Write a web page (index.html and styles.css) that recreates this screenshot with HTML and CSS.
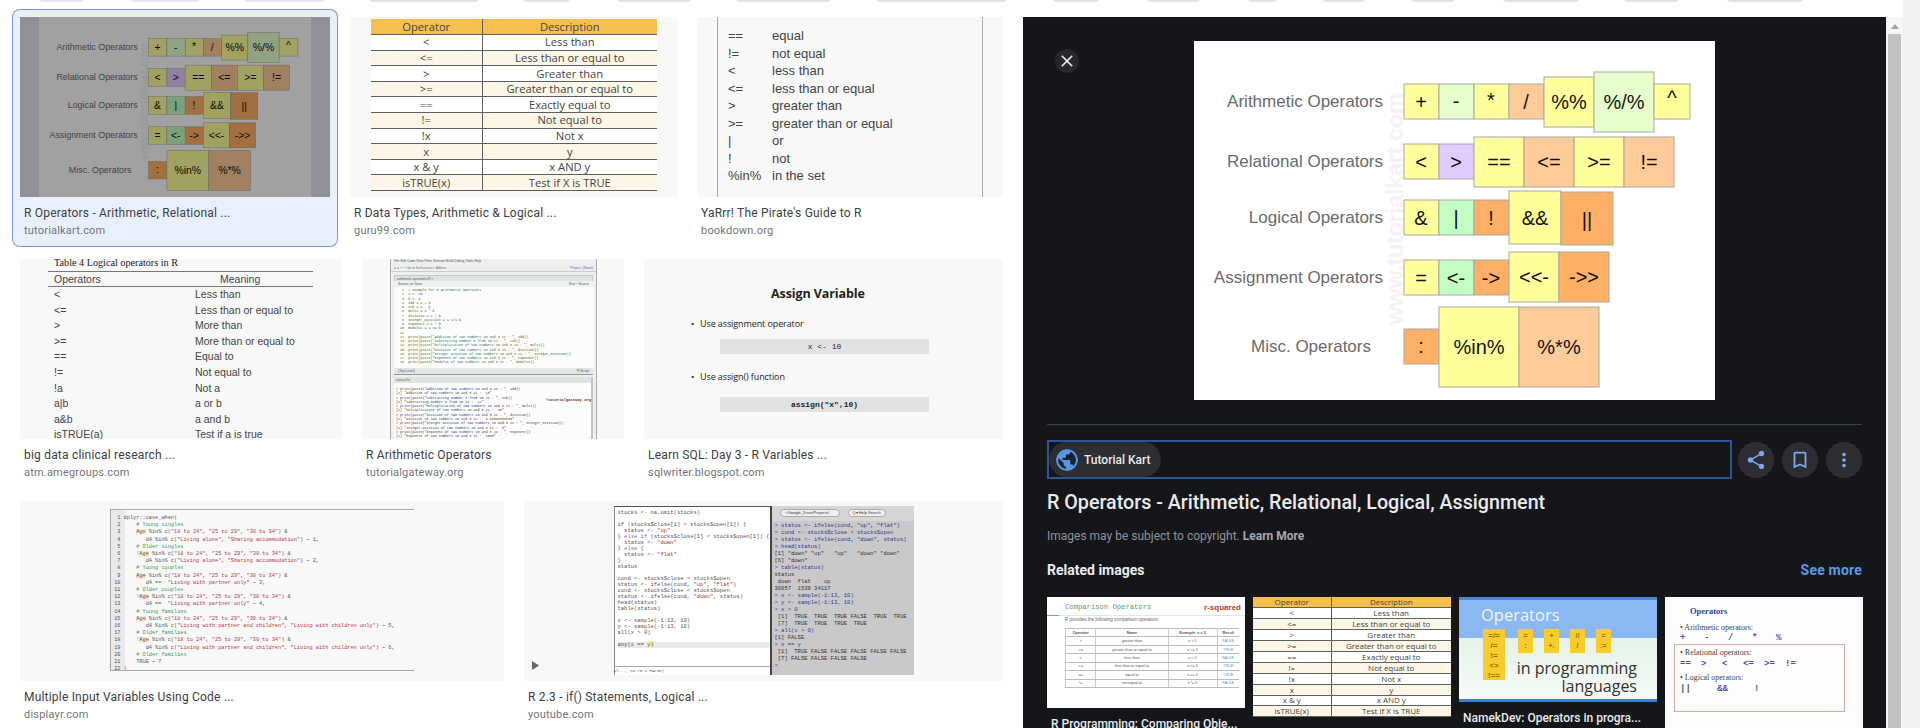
FILE: index.html
```html
<!DOCTYPE html>
<html lang="en">
<head>
<meta charset="utf-8">
<title>Image results</title>
<link rel="stylesheet" href="styles.css">
</head>
<body>
<svg class="defs" width="0" height="0" aria-hidden="true">
  <symbol id="ops" viewBox="0 0 521 359" preserveAspectRatio="none">
    <rect width="521" height="359" fill="#fff"/>
    <text class="mark" transform="translate(209 284) rotate(-90)" textLength="232">www.tutorialkart.com</text>
    <g class="lab">
      <text x="189" y="66">Arithmetic Operators</text>
      <text x="189" y="126">Relational Operators</text>
      <text x="189" y="182">Logical Operators</text>
      <text x="189" y="242">Assignment Operators</text>
      <text x="177" y="311">Misc. Operators</text>
    </g>
    <g class="box">
      <rect class="y" x="210" y="43" width="35" height="35"/>
      <rect class="g" x="245" y="43" width="35" height="35"/>
      <rect class="y" x="280" y="43" width="35" height="35"/>
      <rect class="o" x="315" y="43" width="35" height="35"/>
      <rect class="y" x="350" y="36" width="50" height="50"/>
      <rect class="g" x="400" y="31" width="60" height="60"/>
      <rect class="y" x="460" y="43" width="36" height="35"/>
      <rect class="y" x="210" y="103" width="35" height="35"/>
      <rect class="p" x="245" y="103" width="35" height="35"/>
      <rect class="y" x="280" y="96" width="50" height="50"/>
      <rect class="o" x="330" y="96" width="50" height="50"/>
      <rect class="y" x="380" y="96" width="50" height="50"/>
      <rect class="o" x="430" y="96" width="50" height="50"/>
      <rect class="y" x="210" y="159" width="35" height="35"/>
      <rect class="m" x="245" y="159" width="35" height="35"/>
      <rect class="d" x="280" y="159" width="35" height="35"/>
      <rect class="y" x="315" y="150" width="52" height="53"/>
      <rect class="d" x="367" y="151" width="52" height="53"/>
      <rect class="y" x="210" y="219" width="35" height="35"/>
      <rect class="m" x="245" y="219" width="35" height="35"/>
      <rect class="d" x="280" y="219" width="35" height="35"/>
      <rect class="y" x="315" y="211" width="50" height="50"/>
      <rect class="d" x="365" y="211" width="50" height="50"/>
      <rect class="d" x="210" y="288" width="35" height="35"/>
      <rect class="y" x="245" y="266" width="80" height="80"/>
      <rect class="o" x="325" y="266" width="80" height="80"/>
    </g>
    <g class="sym">
      <text x="227" y="68">+</text><text x="262" y="67">-</text><text x="297" y="66">*</text><text x="332" y="68">/</text>
      <text x="375" y="68">%%</text><text x="430" y="68">%/%</text><text x="478" y="64">^</text>
      <text x="227" y="128">&lt;</text><text x="262" y="128">&gt;</text><text x="305" y="128">==</text><text x="355" y="128">&lt;=</text><text x="405" y="128">&gt;=</text><text x="455" y="128">!=</text>
      <text x="227" y="184">&amp;</text><text x="262" y="184">|</text><text x="297" y="184">!</text><text x="341" y="184">&amp;&amp;</text><text x="393" y="186">||</text>
      <text x="227" y="244">=</text><text x="262" y="244">&lt;-</text><text x="297" y="244">-&gt;</text><text x="340" y="243">&lt;&lt;-</text><text x="390" y="243">-&gt;&gt;</text>
      <text x="227" y="312">:</text><text x="285" y="313">%in%</text><text x="365" y="313">%*%</text>
    </g>
  </symbol>
</svg>

<svg class="chips" width="1903" height="2" aria-hidden="true">
  <g class="chip-a">
    <rect x="38" y="-8" width="47" height="10" rx="5"/><rect x="129" y="-8" width="72" height="10" rx="5"/><rect x="243" y="-8" width="83" height="10" rx="5"/>
  </g>
  <g class="chip-b">
    <rect x="368" y="-8" width="112" height="10" rx="5"/><rect x="522" y="-8" width="49" height="10" rx="5"/><rect x="616" y="-8" width="76" height="10" rx="5"/><rect x="735" y="-8" width="97" height="10" rx="5"/><rect x="875" y="-8" width="133" height="10" rx="5"/><rect x="1052" y="-8" width="48" height="10" rx="5"/><rect x="1146" y="-8" width="55" height="10" rx="5"/><rect x="1247" y="-8" width="31" height="10" rx="5"/><rect x="1321" y="-8" width="46" height="10" rx="5"/><rect x="1410" y="-8" width="46" height="10" rx="5"/><rect x="1502" y="-8" width="78" height="10" rx="5"/><rect x="1623" y="-8" width="57" height="10" rx="5"/><rect x="1726" y="-8" width="78" height="10" rx="5"/>
  </g>
</svg>

<div class="page">
  <main class="results">
    <div class="row">
      <article class="card selected">
        <div class="thumb w310 ops-thumb"><svg class="ops-small"><use href="#ops"/></svg></div>
        <div class="title">R Operators - Arithmetic, Relational ...</div>
        <div class="site">tutorialkart.com</div>
      </article>
      <article class="card">
        <div class="thumb w327 center-x">
          <table class="optable big">
            <tr><th class="c1">Operator</th><th>Description</th></tr>
            <tr><td>&lt;</td><td>Less than</td></tr>
            <tr><td>&lt;=</td><td>Less than or equal to</td></tr>
            <tr><td>&gt;</td><td>Greater than</td></tr>
            <tr><td>&gt;=</td><td>Greater than or equal to</td></tr>
            <tr><td>==</td><td>Exactly equal to</td></tr>
            <tr><td>!=</td><td>Not equal to</td></tr>
            <tr><td>!x</td><td>Not x</td></tr>
            <tr><td>x</td><td>y</td></tr>
            <tr><td>x &amp; y</td><td>x AND y</td></tr>
            <tr><td>isTRUE(x)</td><td>Test if X is TRUE</td></tr>
          </table>
        </div>
        <div class="title">R Data Types, Arithmetic &amp; Logical ...</div>
        <div class="site">guru99.com</div>
      </article>
      <article class="card">
        <div class="thumb w306 pirate">
          <dl class="pirate-list">
            <dt>==</dt><dd>equal</dd>
            <dt>!=</dt><dd>not equal</dd>
            <dt>&lt;</dt><dd>less than</dd>
            <dt>&lt;=</dt><dd>less than or equal</dd>
            <dt>&gt;</dt><dd>greater than</dd>
            <dt>&gt;=</dt><dd>greater than or equal</dd>
            <dt>|</dt><dd>or</dd>
            <dt>!</dt><dd>not</dd>
            <dt>%in%</dt><dd>in the set</dd>
          </dl>
        </div>
        <div class="title">YaRrr! The Pirate's Guide to R</div>
        <div class="site">bookdown.org</div>
      </article>
    </div>

    <div class="row">
      <article class="card">
        <div class="thumb w322 table4">
          <div class="t4-cap">Table 4 Logical operators in R</div>
          <div class="t4-head"><span>Operators</span><span>Meaning</span></div>
          <div class="t4-row"><span>&lt;</span><span>Less than</span></div>
          <div class="t4-row"><span>&lt;=</span><span>Less than or equal to</span></div>
          <div class="t4-row"><span>&gt;</span><span>More than</span></div>
          <div class="t4-row"><span>&gt;=</span><span>More than or equal to</span></div>
          <div class="t4-row"><span>==</span><span>Equal to</span></div>
          <div class="t4-row"><span>!=</span><span>Not equal to</span></div>
          <div class="t4-row"><span>!a</span><span>Not a</span></div>
          <div class="t4-row"><span>a|b</span><span>a or b</span></div>
          <div class="t4-row"><span>a&amp;b</span><span>a and b</span></div>
          <div class="t4-row"><span>isTRUE(a)</span><span>Test if a is true</span></div>
        </div>
        <div class="title">big data clinical research ...</div>
        <div class="site">atm.amegroups.com</div>
      </article>
      <article class="card">
        <div class="thumb w262 center-x">
          <div class="rstudio">
            <div class="rs-menu">File  Edit  Code  View  Plots  Session  Build  Debug  Tools  Help</div>
            <div class="rs-tool"><span class="tool-icons">● ● ▪ ▪ ▪ Go to file/function ▪ Addins</span><span class="tool-proj">Project: (None)</span></div>
            <div class="rs-tab">arithmetic.operators.R ×</div>
            <div class="rs-sub"><span>Source on Save</span><span>Run ▪ Source</span></div>
            <pre class="rs-code"> 1  # Example for R Arithmetic Operators
 2  a &lt;- 10
 3  b &lt;- 3
 4  add = a + b
 5  sub = a - b
 6  multi = a * b
 7  division = a / b
 8  Integer_Division = a %/% b
 9  exponent = a ^ b
10  modulus = a %% b
11
12  print(paste("Addition of two numbers 10 and 3 is : ", add))
13  print(paste("Subtracting Number 3 from 10 is : ", sub))
14  print(paste("Multiplication of two numbers 10 and 3 is : ", multi))
15  print(paste("Division of two numbers 10 and 3 is : ", division))
16  print(paste("Integer Division of two numbers 10 and 3 is : ", Integer_Division))
17  print(paste("Exponent of two numbers 10 and 3 is : ", exponent))
18  print(paste("Modulus of two numbers 10 and 3 is : ", modulus))</pre>
            <div class="rs-bar"><span>(Top Level)</span><span>R Script</span></div>
            <div class="rs-console">
              <div class="rs-ctitle">Console</div>
              <pre class="rs-out"><span class="blue">&gt; print(paste("Addition of two numbers 10 and 3 is : ", add))</span>
[1] "Addition of two numbers 10 and 3 is :  13"
<span class="blue">&gt; print(paste("Subtracting Number 3 from 10 is : ", sub))</span>
[1] "Subtracting Number 3 from 10 is :  12"
<span class="blue">&gt; print(paste("Multiplication of two numbers 10 and 3 is : ", multi))</span>
[1] "Multiplication of two numbers 10 and 3 is :  30"
<span class="blue">&gt; print(paste("Division of two numbers 10 and 3 is : ", division))</span>
[1] "Division of two numbers 10 and 3 is :  3.33333333333"
<span class="blue">&gt; print(paste("Integer Division of two numbers 10 and 3 is : ", Integer_Division))</span>
[1] "Integer Division of two numbers 10 and 3 is :  3"
<span class="blue">&gt; print(paste("Exponent of two numbers 10 and 3 is : ", exponent))</span>
[1] "Exponent of two numbers 10 and 3 is :  1000"</pre>
              <div class="rs-stamp">©tutorialgateway.org</div>
            </div>
          </div>
        </div>
        <div class="title">R Arithmetic Operators</div>
        <div class="site">tutorialgateway.org</div>
      </article>
      <article class="card">
        <div class="thumb w359 assign">
          <div class="as-title">Assign Variable</div>
          <div class="as-bullet">Use assignment operator</div>
          <div class="as-code">x &lt;- 10</div>
          <div class="as-bullet second">Use assign() function</div>
          <div class="as-code bold">assign("x",10)</div>
        </div>
        <div class="title">Learn SQL: Day 3 - R Variables ...</div>
        <div class="site">sqlwriter.blogspot.com</div>
      </article>
    </div>

    <div class="row">
      <article class="card">
        <div class="thumb w484 center-x">
          <pre class="code-shot">  1 dplyr::case_when(
  2     <i># Young singles</i>
  3     <u>Age</u> %in% c(<b>"18 to 24", "25 to 29", "30 to 34"</b>) &amp;
  4        d4 %in% c(<b>"Living alone", "Sharing accommodation"</b>) ~ 1,
  5     <i># Older singles</i>
  6     !<u>Age</u> %in% c(<b>"18 to 24", "25 to 29", "30 to 34"</b>) &amp;
  7        d4 %in% c(<b>"Living alone", "Sharing accommodation"</b>) ~ 2,
  8     <i># Young couples</i>
  9     <u>Age</u> %in% c(<b>"18 to 24", "25 to 29", "30 to 34"</b>) &amp;
 10        d4 ==  <b>"Living with partner only"</b> ~ 3,
 11     <i># Older couples</i>
 12     !<u>Age</u> %in% c(<b>"18 to 24", "25 to 29", "30 to 34"</b>) &amp;
 13        d4 ==  <b>"Living with partner only"</b> ~ 4,
 14     <i># Young families</i>
 15     <u>Age</u> %in% c(<b>"18 to 24", "25 to 29", "30 to 34"</b>) &amp;
 16        d4 %in% c(<b>"Living with partner and children", "Living with children only"</b>) ~ 5,
 17     <i># Older families</i>
 18     !<u>Age</u> %in% c(<b>"18 to 24", "25 to 29", "30 to 34"</b>) &amp;
 19        d4 %in% c(<b>"Living with partner and children", "Living with children only"</b>) ~ 6,
 20     <i># Older families</i>
 21     TRUE ~ 7
 22 )</pre>
        </div>
        <div class="title">Multiple Input Variables Using Code ...</div>
        <div class="site">displayr.com</div>
      </article>
      <article class="card">
        <div class="thumb w479 center-x video">
          <div class="r-shot">
            <div class="r-left">
<pre class="r-src">stocks &lt;- na.omit(stocks)

if (stocks$close[1] &gt; stocks$open[1]) {
  status &lt;- <b>"up"</b>
} <i>else if</i> (stocks$close[1] &lt; stocks$open[1]) {
  status &lt;- <b>"down"</b>
} <i>else</i> {
  status &lt;- <b>"flat"</b>
}
status

cond &lt;- stocks$close &gt; stocks$open
status &lt;- ifelse(cond, <b>"up"</b>, <b>"flat"</b>)
cond &lt;- stocks$close &lt; stocks$open
status &lt;- ifelse(cond, <b>"down"</b>, status)
head(status)
table(status)

x &lt;- sample(-1:13, 10)
y &lt;- sample(-1:13, 10)
all(x &gt; 0)

<span class="hl">any(x == <em>y)</em></span></pre>
              <div class="r-foot">al..., na.rm = FALSE)</div>
            </div>
            <div class="r-right">
              <div class="r-pills"><span class="r-pill wide">~/Google_Drive/Projects/</span><span class="r-pill">Q▾ Help Search</span></div>
<pre class="r-con"><span class="blue">&gt; status &lt;- ifelse(cond, "up", "flat")
&gt; cond &lt;- stocks$close &lt; stocks$open
&gt; status &lt;- ifelse(cond, "down", status)
&gt; head(status)</span>
[1] "down" "up"   "up"   "down" "down"
[6] "down"
<span class="blue">&gt; table(status)</span>
status
 down  flat    up
36057  1539 34117
<span class="blue">&gt; x &lt;- sample(-1:13, 10)
&gt; y &lt;- sample(-1:13, 10)
&gt; x &gt; 0</span>
 [1]  TRUE  TRUE  TRUE FALSE  TRUE  TRUE
 [7]  TRUE  TRUE  TRUE  TRUE
<span class="blue">&gt; all(x &gt; 0)</span>
[1] FALSE
<span class="blue">&gt; x == y</span>
 [1]  TRUE FALSE FALSE FALSE FALSE FALSE
 [7] FALSE FALSE FALSE FALSE
<span class="blue">&gt;</span></pre>
            </div>
          </div>
          <svg class="play" width="7" height="9" viewBox="0 0 7 9" aria-hidden="true"><path d="M0 0l7 4.500-7 4.500z"/></svg>
        </div>
        <div class="title">R 2.3 - if() Statements, Logical ...</div>
        <div class="site">youtube.com</div>
      </article>
    </div>
  </main>

  <aside class="panel">
    <button class="close" aria-label="Close">
      <svg width="20" height="20" viewBox="0 0 24 24"><path d="M19 6.410L17.590 5 12 10.590 6.410 5 5 6.410 10.590 12 5 17.590 6.410 19 12 13.410 17.590 19 19 17.590 13.410 12z"/></svg>
    </button>
    <div class="hero"><svg class="ops-large"><use href="#ops"/></svg></div>
    <hr class="rule">
    <div class="source-row">
      <div class="focus">
        <div class="source-chip">
          <svg width="22" height="22" viewBox="2 2 20 20" class="globe"><path d="M12 2C6.480 2 2 6.480 2 12s4.480 10 10 10 10-4.480 10-10S17.520 2 12 2zm-1 17.930c-3.950-.490-7-3.850-7-7.930 0-.620.080-1.210.210-1.790L9 15v1c0 1.100.900 2 2 2v1.930zm6.900-2.540c-.260-.810-1-1.390-1.900-1.390h-1v-3c0-.550-.450-1-1-1H8v-2h2c.550 0 1-.450 1-1V7h2c1.100 0 2-.900 2-2v-.410c2.930 1.190 5 4.060 5 7.410 0 2.080-.800 3.970-2.100 5.390z"/></svg>
          <span>Tutorial Kart</span>
        </div>
      </div>
      <div class="actions">
        <span class="round"><svg width="22" height="22" viewBox="0 0 24 24"><path d="M18 16.080c-.760 0-1.440.300-1.960.770L8.910 12.700c.050-.230.090-.460.090-.700s-.040-.470-.090-.700l7.050-4.110c.540.500 1.250.810 2.040.810 1.660 0 3-1.340 3-3s-1.340-3-3-3-3 1.340-3 3c0 .240.040.470.090.700L8.040 9.810C7.500 9.310 6.790 9 6 9c-1.660 0-3 1.340-3 3s1.340 3 3 3c.790 0 1.500-.310 2.040-.810l7.120 4.160c-.050.210-.080.430-.080.650 0 1.610 1.310 2.920 2.920 2.920 1.610 0 2.920-1.310 2.920-2.920s-1.310-2.920-2.920-2.920z"/></svg></span>
        <span class="round"><svg width="22" height="22" viewBox="0 0 24 24"><path d="M17 3H7c-1.100 0-2 .900-2 2v16l7-3 7 3V5c0-1.100-.900-2-2-2zm0 15l-5-2.180L7 18V5h10v13z"/></svg></span>
        <span class="round"><svg width="22" height="22" viewBox="0 0 24 24"><path d="M12 8c1.100 0 2-.900 2-2s-.900-2-2-2-2 .900-2 2 .900 2 2 2zm0 2c-1.100 0-2 .900-2 2s.900 2 2 2 2-.900 2-2-.900-2-2-2zm0 6c-1.100 0-2 .900-2 2s.900 2 2 2 2-.900 2-2-.900-2-2-2z"/></svg></span>
      </div>
    </div>
    <h1 class="heading">R Operators - Arithmetic, Relational, Logical, Assignment</h1>
    <p class="copyright">Images may be subject to copyright. <strong>Learn More</strong></p>
    <div class="related-head"><h2>Related images</h2><a>See more</a></div>
    <div class="related">
      <div class="rel-col">
        <div class="slide">
          <div class="sl-top"><span class="sl-title">Comparison Operators</span><span class="sl-brand">r-squared</span></div>
          <div class="sl-line"></div>
          <div class="sl-text">R provides the following comparison operators:</div>
          <table class="sl-table">
            <tr><th>Operator</th><th>Name</th><th>Example: x = 5</th><th>Result</th></tr>
            <tr><td>&gt;</td><td>greater than</td><td>x &gt; 5</td><td class="v">FALSE</td></tr>
            <tr><td>&gt;=</td><td>greater than or equal to</td><td>x &gt;= 5</td><td class="v">TRUE</td></tr>
            <tr><td>&lt;</td><td>less than</td><td>x &lt; 5</td><td class="v">FALSE</td></tr>
            <tr><td>&lt;=</td><td>less than or equal to</td><td>x &lt;= 5</td><td class="v">TRUE</td></tr>
            <tr><td>==</td><td>equal to</td><td>x == 5</td><td class="v">TRUE</td></tr>
            <tr><td>!=</td><td>not equal to</td><td>x != 5</td><td class="v">FALSE</td></tr>
          </table>
        </div>
        <div class="rel-cap">R Programming: Comparing Obje...</div>
      </div>
      <div class="rel-col">
        <table class="optable small">
          <tr><th class="c1">Operator</th><th>Description</th></tr>
          <tr><td>&lt;</td><td>Less than</td></tr>
          <tr><td>&lt;=</td><td>Less than or equal to</td></tr>
          <tr><td>&gt;</td><td>Greater than</td></tr>
          <tr><td>&gt;=</td><td>Greater than or equal to</td></tr>
          <tr><td>==</td><td>Exactly equal to</td></tr>
          <tr><td>!=</td><td>Not equal to</td></tr>
          <tr><td>!x</td><td>Not x</td></tr>
          <tr><td>x</td><td>y</td></tr>
          <tr><td>x &amp; y</td><td>x AND y</td></tr>
          <tr><td>isTRUE(x)</td><td>Test if X is TRUE</td></tr>
        </table>
      </div>
      <div class="rel-col">
        <div class="namek">
          <div class="nk-title">Operators</div>
          <div class="nk-blocks">
            <span class="nk-b tall">=/=<br>/=<br>!=<br>&lt;&gt;<br>!==</span>
            <span class="nk-b">=<br>:</span><span class="nk-b">+<br>+.</span><span class="nk-b">//<br>/</span><span class="nk-b">=<br>:=</span>
          </div>
          <div class="nk-text">in programming<br>languages</div>
        </div>
        <div class="rel-cap">NamekDev: Operators in progra...</div>
      </div>
      <div class="rel-col">
        <div class="notes">
          <div class="nt-head">Operators</div>
          <div class="nt-item">Arithmetic operators:</div>
          <div class="nt-sym s-a"><span>+</span><span>-</span><span>/</span><span>*</span><span>%</span></div>
          <div class="nt-box">
            <div class="nt-item">Relational operators:</div>
            <div class="nt-sym s-r"><span>==</span><span>&gt;</span><span>&lt;</span><span>&lt;=</span><span>&gt;=</span><span>!=</span></div>
            <div class="nt-item">Logical operators:</div>
            <div class="nt-sym s-l"><span>||</span><span>&amp;&amp;</span><span>!</span></div>
          </div>
        </div>
      </div>
    </div>
  </aside>

  <div class="scroll-inner" aria-hidden="true"><span class="arrow"></span><span class="thumbbar"></span></div>
  <div class="scroll-outer" aria-hidden="true"></div>
</div>
</body>
</html>
```
FILE: styles.css
```css
* { box-sizing: border-box; }
html, body { margin: 0; padding: 0; }
body { width: 1920px; height: 728px; overflow: hidden; background: #fff; font-family: Roboto, "Liberation Sans", sans-serif; position: relative; }
.defs { position: absolute; }
.chips { position: absolute; left: 0; top: 0; }
.chip-a { fill: #e9e3ee; }
.chip-b { fill: #e2e3e5; }

.page { display: flex; height: 728px; }
.results { width: 1023px; flex: none; padding: 9px 0 0 12px; display: flex; flex-direction: column; gap: 4px; }
.row { display: flex; gap: 4px; height: 238px; flex: none; }
.card { padding: 8px 8px 0; height: 238px; flex: none; border-radius: 8px; }
.card.selected { background: #e8f0fe; box-shadow: inset 0 0 0 1px #6f9fe0; }
.thumb { height: 180px; background: #f8f8f8; position: relative; overflow: hidden; }
.w262 { width: 262px; } .w306 { width: 306px; } .w310 { width: 310px; } .w322 { width: 322px; } .w327 { width: 327px; }
.w359 { width: 359px; } .w479 { width: 479px; } .w484 { width: 484px; }
.center-x { display: flex; justify-content: center; }
.title { margin: 8px 4px 0; font-size: 12px; line-height: 16px; color: #3c4043; letter-spacing: .2px; white-space: nowrap; }
.site { margin: 2px 4px 0; font-size: 11px; line-height: 16px; color: #70757a; letter-spacing: .2px; white-space: nowrap; }

/* operator diagram */
.ops-thumb { display: flex; justify-content: center; background: #e2e6f0; }
.ops-thumb::after { content: ""; position: absolute; inset: 0; background: rgba(0,0,0,.37); }
.ops-small { width: 272px; height: 180px; display: block; }
.ops-large { width: 521px; height: 359px; display: block; }
.lab text { font: 17px "Liberation Sans", sans-serif; fill: #6a6a6a; text-anchor: end; }
.mark { font: bold 24px "Liberation Sans", sans-serif; fill: #f3f3f3; }
.box rect { stroke: #a8a8a0; stroke-width: 1; }
.y { fill: #ffff9c; } .g { fill: #e6ffcc; } .o { fill: #ffcc99; } .p { fill: #e2ccff; } .m { fill: #c4ffc4; } .d { fill: #ffb066; }
.sym text { font: 20px "Liberation Sans", sans-serif; fill: #111; text-anchor: middle; }

/* operator table */
.optable { border-collapse: collapse; table-layout: fixed; font-family: "Open Sans", sans-serif; color: #444; text-align: center; background: #fff; }
.optable th { background: #f6c04e; font-weight: 400; }
.optable th, .optable td { padding: 0; border: 0; border-bottom: 1px solid #5f5f5f; border-left: 1px solid #5f5f5f; white-space: nowrap; overflow: hidden; }
.optable th:first-child, .optable td:first-child { border-left: 0; }
.optable tr:nth-child(odd) td { background: #fdf5e6; }
.optable.big { margin-top: 2px; width: 286px; height: 172px; font-size: 11.200px; line-height: 14px; }
.optable.big tr { height: 15.600px; }
.optable.big .c1 { width: 112px; }
.optable.small { width: 198px; height: 120px; font-size: 8px; line-height: 1; }
.optable.small tr { height: 10.900px; }
.optable.small .c1 { width: 78px; }

/* pirate list */
.pirate { padding: 0 20px; }
.pirate-list { margin: 0; height: 180px; width: 266px; border-left: 1px solid #aaa; border-right: 1px solid #aaa; padding: 10px 0 0 10px; display: grid; grid-template-columns: 44px 1fr; grid-auto-rows: 17.500px; font: 13px/17.500px "Liberation Sans", sans-serif; color: #444; }
.pirate-list dt, .pirate-list dd { margin: 0; }

/* table 4 */
.table4 { padding: 0 29px 0 28px; font: 10.500px "Liberation Sans", sans-serif; color: #444; }
.t4-cap { font: 10.200px/8px "Liberation Serif", serif; color: #222; padding: 0 0 4px 6px; }
.t4-head { height: 16px; border-top: 1px solid #777; border-bottom: 1px solid #777; padding-left: 6px; display: flex; line-height: 15px; }
.t4-head span:first-child { width: 166px; }
.t4-row { height: 15.600px; line-height: 14px; padding-left: 6px; display: flex; white-space: nowrap; }
.t4-row span:first-child { width: 141px; }

/* rstudio */
.rstudio { width: 207px; height: 180px; background: #eef0ef; border-left: 1px solid #aaa; border-right: 1px solid #aaa; font-family: "Liberation Mono", monospace; font-size: 3.400px; color: #556; overflow: hidden; margin-left: 1px; }
.rs-menu { height: 5px; line-height: 5px; padding-left: 3px; font-family: "Liberation Sans", sans-serif; }
.rs-tool { height: 8px; line-height: 8px; display: flex; justify-content: space-between; padding: 0 3px; border-bottom: 1px solid #ccc; font-family: "Liberation Sans", sans-serif; }
.tool-icons { color: #5a80b0; }
.tool-proj { color: #3f6fae; }
.rs-tab { height: 6px; margin: 3px 3px 0; line-height: 6px; background: #dfe3e3; padding-left: 2px; font-family: "Liberation Sans", sans-serif; border: 1px solid #c8c8c8; border-bottom: 0; }
.rs-sub { height: 6px; line-height: 6px; margin: 0 3px; padding: 0 4px; display: flex; justify-content: space-between; background: #f0f2f2; font-family: "Liberation Sans", sans-serif; }
.rs-code { margin: 0 3px; height: 81px; padding: 1px 0 0 6px; font: inherit; line-height: 4.250px; color: #3f6b3f; background: #fbfcfb; white-space: pre; overflow: hidden; }
.rs-bar { height: 7px; line-height: 6px; margin: 0 3px; padding: 0 4px; background: #e4e7e7; border-bottom: 1px solid #999; display: flex; justify-content: space-between; font-family: "Liberation Sans", sans-serif; }
.rs-console { margin: 2px 3px 0; background: #fbfcfb; position: relative; height: 70px; border-right: 2px solid #c5c5c5; }
.rs-ctitle { height: 6px; line-height: 6px; padding-left: 2px; background: #dfe3e3; }
.rs-out { margin: 0; padding: 4px 0 0 2px; font: inherit; line-height: 4.300px; color: #444; white-space: pre; overflow: hidden; }
.blue { color: #33358f; }
.rs-stamp { position: absolute; right: 0; top: 21px; color: #6b2f1e; font-weight: bold; font-size: 3.800px; background: #fbfcfb; }

/* assign */
.assign { background: #f8f8f8; font-family: "Open Sans", sans-serif; color: #222; padding: 27px 0 0 56px; }
.as-title { font-size: 12.500px; font-weight: 700; line-height: 16px; padding-left: 71px; letter-spacing: -.1px; }
.as-bullet { margin-top: 15px; margin-left: -9px; font-size: 9px; line-height: 14px; letter-spacing: -.1px; display: flex; }
.as-bullet::before { content: "•"; width: 9px; flex: none; }
.as-bullet.second { margin-top: 16px; }
.as-code { margin: 8px 0 0 20px; width: 209px; height: 15px; background: #e1e2e4; font: 8px/15px "Liberation Mono", monospace; text-align: center; }
.as-code.bold { font-weight: 700; margin-top: 13px; }

/* code shot */
.code-shot { margin: 8px 0 0; width: 304px; height: 162px; padding-top: 5px; font: 5.250px/7.200px "Liberation Mono", monospace; color: #555; border-top: 1px solid #aaa; border-bottom: 1px solid #aaa; border-left: 1px solid #aaa; background: linear-gradient(90deg, #e9e9e9 14px, #f8f8f8 14px); overflow: hidden; }
.code-shot i { font-style: normal; color: #3c9a63; }
.code-shot b { font-weight: 400; color: #b5384e; }
.code-shot u { text-decoration: none; background: #fbe6cf; }

/* R shot */
.video { position: relative; }
.r-shot { margin: 5px 0 0 0; width: 300px; height: 169px; display: flex; font-family: "Liberation Mono", monospace; font-size: 5.500px; }
.r-left { width: 158px; background: #fff; border-left: 1px solid #888; border-right: 2px solid #444; border-top: 1px solid #555; position: relative; color: #555; }
.r-src { margin: 0; padding: 3px 0 0 3px; font: inherit; line-height: 6px; height: 150px; overflow: hidden; }
.r-src b { font-weight: 400; color: #a33; }
.r-src i { font-style: normal; color: #86a; }
.r-src em { font-style: normal; background: #f2ee9c; }
.hl { display: inline-block; width: 152px; background: #e9e9e9; }
.r-foot { position: absolute; left: -1px; bottom: 0; right: 0; height: 9px; line-height: 9px; border-top: 1px solid #aaa; font-size: 4px; }
.r-right { flex: 1; background: #c9c9c9; color: #333; }
.r-pills { height: 15px; display: flex; gap: 8px; padding: 3px 0 0 8px; background: #d6d6d6; font: 4px/8px "Liberation Sans", sans-serif; }
.r-pill { background: #f0f0f0; border: 1px solid #aaa; border-radius: 5px; padding: 0 4px; height: 8px; line-height: 6px; }
.r-pill.wide { width: 60px; }
.r-con { margin: 0; padding: 1px 0 0 3px; font: inherit; line-height: 7px; }
.play { position: absolute; left: 8px; bottom: 11px; fill: #666; }

/* panel */
.panel { width: 863px; flex: none; margin-top: 17px; height: 711px; background: #15161a; padding: 24px 24px 0; position: relative; overflow: hidden; color: #e8eaed; }
.close { position: absolute; left: 32px; top: 32px; width: 24px; height: 24px; padding: 2px; border: 0; border-radius: 50%; background: #26282c; fill: #e6e6e6; }
.close svg { display: block; }
.hero { display: flex; justify-content: center; height: 359px; }
.rule { margin: 24px 0 0; height: 1px; border: 0; background: #3c4043; }
.source-row { margin-top: 15px; display: flex; align-items: center; height: 39px; }
.focus { width: 685px; height: 39px; border: 2px solid #2c5697; padding: 0; flex: none; }
.source-chip { width: 112px; height: 35px; border-radius: 18px; background: #2d2e31; display: flex; align-items: center; gap: 6px; padding-left: 7px; font-size: 12px; font-weight: 500; color: #e8eaed; white-space: nowrap; }
.globe { fill: #5a95e4; background: #1b2330; border-radius: 50%; flex: none; }
.actions { display: flex; gap: 8px; margin-left: 6px; }
.round { width: 36px; height: 36px; border-radius: 50%; background: #2d2e31; display: flex; align-items: center; justify-content: center; fill: #7aa8ea; }
.heading { margin: 12px 0 0; font-size: 19.700px; line-height: 24px; font-weight: 500; color: #e8eaed; white-space: nowrap; }
.copyright { margin: 11px 0 0; font-size: 12px; line-height: 20px; color: #8f9398; }
.copyright strong { font-weight: 700; color: #a5a8ac; }
.related-head { margin-top: 14px; display: flex; justify-content: space-between; align-items: center; height: 20px; }
.related-head h2 { margin: 0; font-size: 14px; font-weight: 700; color: #e8eaed; }
.related-head a { font-size: 14px; font-weight: 700; color: #5b9be8; letter-spacing: .2px; }
.related { margin-top: 17px; display: grid; grid-template-columns: repeat(4, 198px); gap: 8px; align-items: start; }
.rel-cap { margin: 8px 0 0 4px; font-size: 12px; line-height: 16px; font-weight: 500; color: #e8eaed; white-space: nowrap; }

.slide { height: 111px; background: #fff; padding: 4px 0 0 18px; font-family: "Liberation Sans", sans-serif; color: #666; }
.sl-top { display: flex; justify-content: space-between; padding-right: 4px; align-items: center; height: 12px; }
.sl-title { font: 7.200px "Liberation Mono", monospace; color: #5d9a72; }
.sl-brand { font: bold 8px "Liberation Sans", sans-serif; color: #c0392b; }
.sl-line { height: 1px; margin: 2px 0 0 -18px; background: #e5e5e5; border-left: 12px solid #6aa0d6; }
.sl-text { font-size: 4.500px; line-height: 8px; margin-top: 0; }
.sl-table { margin-top: 4px; width: 174px; height: 60px; border-collapse: collapse; font-size: 3.800px; text-align: center; color: #555; }
.sl-table th { font-weight: 700; }
.sl-table th, .sl-table td { border: 1px solid #bbb; border-width: 1px 0; border-left: 1px solid #ccc; border-bottom: 1px solid #bbb; padding: 0; }
.sl-table .v { color: #5aa0c0; }

.namek { height: 105px; position: relative; background: linear-gradient(#8ab8f2 0, #8ab8f2 38px, #e4f3e8 38px, #f6fbf8 100%); border-top: 3px solid #4a86d8; border-bottom: 3px solid #3a7fd5; overflow: hidden; font-family: "Open Sans", sans-serif; }
.nk-title { position: absolute; left: 22px; top: 2px; font-size: 16.500px; line-height: 26px; color: #f2f6fd; }
.nk-blocks { position: absolute; left: 24px; top: 29px; display: flex; gap: 11px; align-items: flex-start; }
.nk-b { width: 15px; background: #f9cc2e; color: #9a6a00; text-align: center; font: bold 7px/10px "Liberation Sans", sans-serif; padding: 2px 0; height: 24px; }
.nk-b.tall { width: 22px; height: 51px; font-size: 8px; margin-right: 2px; }
.nk-text { position: absolute; right: 20px; top: 59px; text-align: right; font-size: 16px; line-height: 18px; color: #333; white-space: nowrap; }

.notes { height: 135px; background: #fdfdfd; padding: 8px 0 0 15px; font-family: "Liberation Serif", serif; color: #444; }
.nt-head { font-size: 8.500px; font-weight: 700; line-height: 12px; color: #3a3ea8; margin-left: 10px; }
.nt-item { font-size: 8px; line-height: 11px; margin-top: 5px; }
.nt-item::before { content: "• "; }
.nt-sym { display: flex; font: 700 9px/11px "Liberation Mono", monospace; color: #4a50b8; position: relative; height: 11px; margin-top: 0; }
.s-a span { width: 24px; }
.s-r span { width: 21px; }
.s-l span { width: 37px; }
.nt-box { margin: 0 0 0 -6px; width: 171px; height: 68px; border: 1px solid #e3a6a6; padding: 0 0 0 5px; }
.nt-box .nt-item { margin-top: 2px; }
.nt-box .nt-sym { margin-top: 1px; margin-bottom: 2px; }

/* scrollbars */
.scroll-inner { width: 17px; flex: none; margin-top: 17px; height: 711px; background: #f6f6f6; position: relative; }
.arrow { position: absolute; left: 5px; top: 7px; width: 0; height: 0; border-left: 4px solid transparent; border-right: 4px solid transparent; border-bottom: 5px solid #a3a3a3; }
.thumbbar { position: absolute; left: 2px; right: 2px; top: 17px; bottom: 0; background: #c1c1c1; }
.scroll-outer { width: 17px; flex: none; background: #f1f1f1; }
```
